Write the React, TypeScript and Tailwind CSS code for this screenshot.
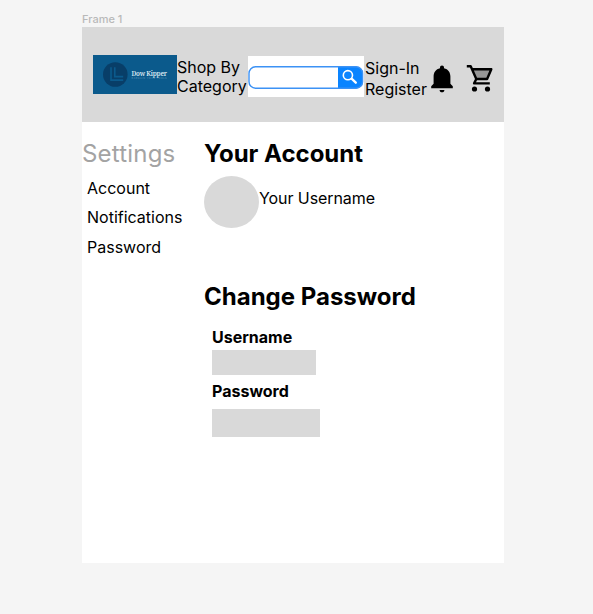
function Logo() {
  return (
    <svg className="mt-7 h-[39px] w-[84px] shrink-0" viewBox="0 0 84 39">
      <rect width="84" height="39" fill="#0b5a8c" />
      <circle cx="22.3" cy="19.5" r="12.3" fill="#083e68" />
      <path d="M18 12.3v12.8h12.2M21.8 12.3v9.3h8.4" fill="none" stroke="#0b5a8c" strokeWidth="1.6" />
      <text x="38.4" y="20.6" fontSize="6.4" fontWeight="600" fill="#dce9f1" textLength="35.6" fontFamily="'Noto Serif', 'Liberation Serif', serif">
        Dow Kipper
      </text>
      <text x="38.6" y="24" fontSize="2.4" fill="#5a92b5" textLength="35" fontFamily="Inter, sans-serif">
        BARGAIN YOUR TOOLS
      </text>
    </svg>
  );
}

function Search() {
  return (
    <div className="mt-[29px] ml-px h-[41px] w-[116px] shrink-0 bg-white">
      <svg className="block" width="116" height="41" viewBox="0 0 116 41">
        <path d="M90 10.5h18a7 7 0 0 1 7 7v8a7 7 0 0 1-7 7H90z" fill="#0a84ff" />
        <rect x="1" y="10.8" width="113.6" height="21.4" rx="6.5" fill="none" stroke="#3c92f5" strokeWidth="1.4" />
        <circle cx="99.9" cy="19.2" r="4.6" fill="none" stroke="#fff" strokeWidth="1.6" />
        <path d="M103.6 22.7l4.2 4" stroke="#fff" strokeWidth="2.3" strokeLinecap="round" />
      </svg>
    </div>
  );
}

function Bell() {
  return (
    <svg className="mt-[35px] -ml-px h-8 w-8 shrink-0" viewBox="0 0 32 32">
      <path d="M13.6 28h4.8c0 1.4-1 2.3-2.4 2.3s-2.4-.9-2.4-2.3z" />
      <path d="M16 3.5c1.2 0 2 .8 2 2v.7c4.200.9 6.400 4.200 6.400 8.300v7.300l2.400 2.400v2.100H5.200v-2.100l2.400-2.400v-7.300c0-4.100 2.200-7.400 6.400-8.300v-.7c0-1.200.8-2 2-2z" />
    </svg>
  );
}

function Cart() {
  return (
    <svg className="mt-[35px] ml-[7px] h-8 w-8 shrink-0" viewBox="0 0 32 32">
      <path d="M7 7.200h19.300l-4.200 9.600H11.300z" fill="#969696" />
      <path d="M1.800 4.300h3.900L11.300 17h10.800l4.200-9.800H7M11.300 17l-2.200 4.400h15.700" fill="none" stroke="#000" strokeWidth="2.400" strokeLinejoin="round" />
      <circle cx="9.500" cy="27" r="2.600" />
      <circle cx="22.500" cy="27" r="2.600" />
    </svg>
  );
}

export default function App() {
  return (
    <div className="h-[614px] w-[593px] overflow-hidden bg-[#f5f5f5] pt-3 pl-[82px] font-['Inter',sans-serif] text-base leading-[19px] text-black">
      <div className="h-[15px] text-[11px] leading-[15px] font-medium text-[#b9b9b9]">Frame 1</div>
      <main className="h-[536px] w-[422px] bg-white">
        <header className="flex h-[95px] items-start bg-[#d9d9d9] pl-[11px]">
          <Logo />
          <div className="mt-[31px] w-[70px] shrink-0">
            Shop By
            <br />
            Category
          </div>
          <Search />
          <div className="mt-[31px] ml-px w-[62px] shrink-0 leading-[21px]">
            <div>Sign-In</div>
            <div>Register</div>
          </div>
          <Bell />
          <Cart />
        </header>
        <div className="flex">
          <nav className="w-[122px] shrink-0 pt-[17px]">
            <h2 className="text-2xl leading-[29px] tracking-[0.2px] text-[#a3a3a3]">Settings</h2>
            <ul className="pt-[11px] pl-[5px]">
              <li className="h-[29px]">Account</li>
              <li className="h-[30px]">Notifications</li>
              <li>Password</li>
            </ul>
          </nav>
          <section className="pt-[17px]">
            <h1 className="text-2xl leading-[29px] font-bold">Your Account</h1>
            <div className="mt-2 flex h-[52px]">
              <div className="h-[52px] w-[55px] rounded-[50%] bg-[#d9d9d9]" />
              <div className="pt-[13px] tracking-[-0.08px]">Your Username</div>
            </div>
            <h1 className="mt-[54px] text-2xl leading-[29px] font-bold">Change Password</h1>
            <form className="pt-[17px] pl-2 font-bold">
              <div>Username</div>
              <div className="mt-[3px] h-[25px] w-[104px] bg-[#d9d9d9]" />
              <div className="mt-[7px]">Password</div>
              <div className="mt-[8px] h-[28px] w-[108px] bg-[#d9d9d9]" />
            </form>
          </section>
        </div>
      </main>
    </div>
  );
}
